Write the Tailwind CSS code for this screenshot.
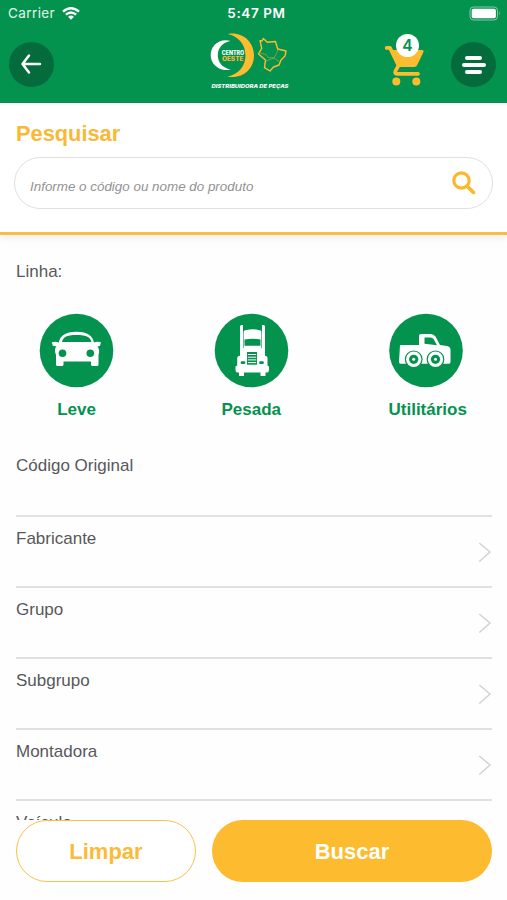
<!DOCTYPE html>
<html lang="pt-BR">
<head>
<meta charset="utf-8">
<meta name="viewport" content="width=device-width, initial-scale=1">
<title>Pesquisar</title>
<script src="https://cdn.jsdelivr.net/npm/@tailwindcss/browser@4"></script>
</head>
<body class="bg-white">
<div class="relative flex h-[900px] w-[507px] flex-col overflow-hidden bg-[#fefefe] font-['Liberation_Sans',Arial,sans-serif] text-[17px] text-[#58585a]">
  <header class="h-[103px] shrink-0 bg-[#04924f] text-white">
    <!-- Status bar -->
    <div class="grid h-[27px] grid-cols-[1fr_auto_1fr] items-center pr-[6px] pl-[8px] font-[Inter,sans-serif] text-[13.5px] leading-[27px]">
      <div class="flex items-center gap-[7px]"><span class="tracking-[0.4px] text-white/90">Carrier</span>
        <svg class="h-[13px] w-[18px]" viewBox="0 0 18 13" fill="none" stroke="#fff" stroke-width="2.3"><path d="M1 4.7Q9-2.2 17 4.7M3.9 7.7Q9 3.2 14.1 7.7"/><path d="M6.1 9.7Q9 7.2 11.9 9.7L9 12.7Z" fill="#fff" stroke="none"/></svg>
      </div>
      <span class="ml-[4px] text-[13.5px] font-semibold tracking-[0.6px]">5:47 PM</span>
      <svg class="h-[15px] w-[32px] justify-self-end" viewBox="0 0 32 15"><rect x="1" y="1" width="27.5" height="13" rx="3.5" fill="none" stroke="#fff" stroke-opacity=".5"/><rect x="2.7" y="2.7" width="24.2" height="9.6" rx="1.8" fill="#fff"/><path d="M30 5.3q1.8 2.2 0 4.4z" fill="#fff" fill-opacity=".6"/></svg>
    </div>
    <!-- Navigation bar -->
    <div class="flex h-[76px] pr-[11px] pl-[9px]">
      <button class="mt-[15px] h-[45px] w-[45px] rounded-full bg-[#046c3c]" aria-label="Voltar">
        <svg class="h-[45px] w-[45px]" viewBox="0 0 45 45" fill="none" stroke="#fff" stroke-width="2.5" stroke-linecap="round" stroke-linejoin="round"><path d="M31 22H13.500M20 13.500L13.500 22L20 30.500"/></svg>
      </button>
      <svg class="ml-[151px] h-[64px] w-[90px] shrink-0" viewBox="205 27 90 64">
        <path fill="#fff" d="M230.500 41C219 38 210.500 46 210.700 55.500C211 65 220 72 230.500 69.500C222.500 68 217.800 62.500 217.800 55.300C217.800 48 222.500 42.500 230.500 41Z"/>
        <path fill="#fdbb30" d="M228 34C242 31.500 254 41.500 254 55.500C254 69.500 242 79.500 227.500 76.500C238.500 74.500 245.500 66 245.500 55.500C245.500 45 239 36.500 228 34Z"/>
        <text x="221.700" y="55.200" textLength="22.500" lengthAdjust="spacingAndGlyphs" font-family="Inter,sans-serif" font-size="5.800" font-weight="800" fill="#fff">CENTRO</text>
        <text x="221.900" y="60.700" textLength="21.600" lengthAdjust="spacingAndGlyphs" font-family="Inter,sans-serif" font-size="6" font-weight="800" fill="#fdbb30">OESTE</text>
        <g fill="none" stroke="#fdbb30" stroke-width="1.400" stroke-linejoin="round"><path d="M260 40.700L262 41L263.300 38.500L267.300 42.300L275.500 41.500L277.700 49L286 51L285 56L281 60L279 65L273.500 67L270 71L264.500 67.700L265.500 60L258.500 54L261.700 48.300Z"/><path stroke-width=".8" opacity=".55" d="M260 53L266 54.500L268 57.500L274 58L277 52.500L278 49.500M274 58L279.500 62M274 58L266 61"/></g>
        <text x="211.500" y="88" textLength="77" lengthAdjust="spacingAndGlyphs" font-family="Inter,sans-serif" font-size="5.400" font-weight="800" font-style="italic" fill="#fff">DISTRIBUIDORA DE PEÇAS</text>
      </svg>
      <div class="relative ml-[89px] h-[60px] w-[42px] shrink-0">
        <svg class="h-[60px] w-[42px]" viewBox="384 27 42 60">
          <path d="M386.700 47.900H390L398.500 65.500L395.300 71.300Q394.500 73.800 397.500 73.800H418" fill="none" stroke="#fdbb30" stroke-width="3.700" stroke-linecap="round" stroke-linejoin="round"/>
          <path d="M391.500 50H422Q424.300 50 423.300 52.200L417.500 64.500Q416.500 67 414 67H398.500Z" fill="#fdbb30"/>
          <circle cx="396.300" cy="81.500" r="4" fill="#fdbb30"/><circle cx="416.300" cy="81.500" r="4" fill="#fdbb30"/>
        </svg>
        <span class="absolute top-[7px] left-[12px] flex h-[23px] w-[23px] items-center justify-center rounded-full bg-white pt-px font-[Inter,sans-serif] text-[15.5px] leading-none font-semibold text-[#04924f]">4</span>
      </div>
      <button class="mt-[15px] ml-auto flex h-[45px] w-[45px] flex-col items-center justify-center gap-[3px] rounded-full bg-[#046c3c]" aria-label="Menu">
        <span class="h-[4px] w-[17px] rounded-full bg-white"></span><span class="h-[4px] w-[24px] rounded-full bg-white"></span><span class="h-[4px] w-[17px] rounded-full bg-white"></span>
      </button>
    </div>
  </header>

  <section class="h-[132px] shrink-0 border-b-[3px] border-[#f6bd47] bg-white px-[14px] pt-[18px] shadow-[0_4px_7px_rgba(0,0,0,0.06)]">
    <h1 class="pl-[2px] text-[21.8px] leading-[26px] font-bold text-[#f8b936]">Pesquisar</h1>
    <div class="mt-[10px] flex h-[52px] items-center justify-between rounded-full border-[1.5px] border-[#e0e0e0] pr-[15px] pl-[15px]">
      <span class="pt-[7px] text-[13.4px] leading-[20px] text-[#929292] italic">Informe o código ou nome do produto</span>
      <svg class="h-[26px] w-[26px]" viewBox="0 0 26 26" fill="none" stroke="#fcb72b"><circle cx="10.500" cy="10.500" r="7.700" stroke-width="3.200"/><path d="M16 16L22.500 22.500" stroke-width="3.800" stroke-linecap="round"/></svg>
    </div>
  </section>

  <main class="flex-1 pt-[27px] pr-[15px] pl-[16px]">
    <p class="leading-[20px]">Linha:</p>
    <div class="mt-[31px] flex justify-between pr-[28.5px] pl-[23px] text-center font-bold text-[#04924f]">
      <div class="flex w-[75px] flex-col items-center">
        <svg class="h-[75px] w-[75px]" viewBox="39 313 75 75"><circle cx="76.500" cy="350.500" r="36.800" fill="#04924f"/>
          <path fill="#fff" fill-rule="evenodd" d="M58.800 342.500C60 336 65 331.700 76.500 331.700C88 331.700 92.500 336 94 342.500C96 341.500 99 341.500 101 342.300L100 345.800L97.500 346.500C99.500 349 99.500 352 98.500 355V364.500Q98.500 366 97 366H92.500Q91 366 91 364.500V361.500H63.500V364.500Q63.500 366 62 366H57.500Q56 366 56 364.500V355C54.500 351 54.500 348 56.500 346.500L52.800 345.800L51.800 342.300C54 341.500 57 341.500 58.800 342.500ZM62 342H91.500C90.500 337.500 87 335 76.500 335C66 335 63 337.500 62 342Z"/>
          <circle cx="62.500" cy="353.300" r="3.800" fill="#04924f"/><circle cx="90.300" cy="353.300" r="3.800" fill="#04924f"/></svg>
        <span class="mt-[12px] leading-[20px]">Leve</span>
      </div>
      <div class="flex w-[75px] flex-col items-center">
        <svg class="h-[75px] w-[75px]" viewBox="213.500 313 75 75"><circle cx="251" cy="350.500" r="36.800" fill="#04924f"/>
          <path fill="#fff" d="M239.500 326.500Q239.500 325 241 325H242.500V356H239.500ZM261.500 325H263Q264.500 325 264.500 326.500V356H261.500Z"/>
          <path fill="#fff" d="M243.100 331.500Q243.100 330 246 330Q252 328.500 258 330Q260.900 330 260.900 331.500V348Q262.500 349 263 355.500Q267 355.500 267 358V365.500L268.500 366.500V370Q268.500 372.500 266.500 372.500H265V376H260V372.500H243.500V376H238.500V372.500H237Q235 372.500 235 370V366.500L236.700 365.500V358Q236.700 355.500 241 355.500V348H243.100Z"/>
          <path d="M244 339.600Q252 338 260 339.600V345.800H244Z" fill="#04924f"/>
          <rect x="246.500" y="352" width="10" height="12.700" fill="#04924f"/><path d="M247.300 354.500h8.400M247.300 357.200h8.400M247.300 359.900h8.400M247.300 362.600h8.400" stroke="#fff" stroke-width="1"/>
          <path d="M241.500 362.700H243.500M260 362.700H262" stroke="#04924f" stroke-width="2.800" stroke-linecap="round"/></svg>
        <span class="mt-[12px] leading-[20px]">Pesada</span>
      </div>
      <div class="flex w-[75px] flex-col items-start">
        <svg class="h-[75px] w-[75px]" viewBox="389 313 75 75"><circle cx="426" cy="350.500" r="36.800" fill="#04924f"/>
          <path fill="#fff" d="M400 345H419V336Q419 334 421 334H431Q433.500 334 435.500 336.500L440 345L447 346Q450 346.500 450.500 349V362Q450.500 363.800 449 363.800H400.500Q399 363.800 399 362Z"/>
          <path fill="#04924f" d="M424.500 337.500H430.500Q432.500 337.500 433.500 339L437 345.300L424.500 343.800Z"/>
          <g fill="#fff" stroke="#04924f" stroke-width="1.200"><circle cx="413.700" cy="359.300" r="8.300"/><circle cx="435.500" cy="359.300" r="8.300"/></g>
          <circle cx="413.700" cy="359.300" r="4.600" fill="#04924f"/><circle cx="435.500" cy="359.300" r="4.600" fill="#04924f"/><circle cx="413.700" cy="359.300" r="1.500" fill="#fff"/><circle cx="435.500" cy="359.300" r="1.500" fill="#fff"/></svg>
        <span class="mt-[12px] leading-[20px]">Utilitários</span>
      </div>
    </div>
    <div class="mt-[36px]">
      <div class="h-[61px] border-b-2 border-[#e1e1e1] leading-[20px]">Código Original</div>
      <div class="flex h-[70.9px] justify-between border-b-2 border-[#e1e1e1] pt-[12px] leading-[20px]"><span>Fabricante</span><svg class="mt-[13px] h-[20px] w-[14px]" viewBox="0 0 14 20" fill="none" stroke="#d2d2d4" stroke-width="1.500"><path d="M1.300 1L12 10L1.300 19.500"/></svg></div>
      <div class="flex h-[70.9px] justify-between border-b-2 border-[#e1e1e1] pt-[12px] leading-[20px]"><span>Grupo</span><svg class="mt-[13px] h-[20px] w-[14px]" viewBox="0 0 14 20" fill="none" stroke="#d2d2d4" stroke-width="1.500"><path d="M1.300 1L12 10L1.300 19.500"/></svg></div>
      <div class="flex h-[70.9px] justify-between border-b-2 border-[#e1e1e1] pt-[12px] leading-[20px]"><span>Subgrupo</span><svg class="mt-[13px] h-[20px] w-[14px]" viewBox="0 0 14 20" fill="none" stroke="#d2d2d4" stroke-width="1.500"><path d="M1.300 1L12 10L1.300 19.500"/></svg></div>
      <div class="flex h-[70.9px] justify-between border-b-2 border-[#e1e1e1] pt-[12px] leading-[20px]"><span>Montadora</span><svg class="mt-[13px] h-[20px] w-[14px]" viewBox="0 0 14 20" fill="none" stroke="#d2d2d4" stroke-width="1.500"><path d="M1.300 1L12 10L1.300 19.500"/></svg></div>
      <div class="pt-[12px] leading-[20px]">Veículo</div>
    </div>
  </main>

  <!-- Action bar pinned over the list -->
  <footer class="absolute inset-x-0 bottom-0 flex h-[80px] gap-[16px] bg-[#fefefe] pr-[15px] pl-[16px] text-[22px] font-bold">
    <button class="h-[62px] w-[180px] rounded-full border-[1.5px] border-[#fbc04b] bg-white text-[#fbbb36]">Limpar</button>
    <button class="h-[62px] flex-1 rounded-full bg-[#fdbb2f] text-white">Buscar</button>
  </footer>
</div>
</body>
</html>
